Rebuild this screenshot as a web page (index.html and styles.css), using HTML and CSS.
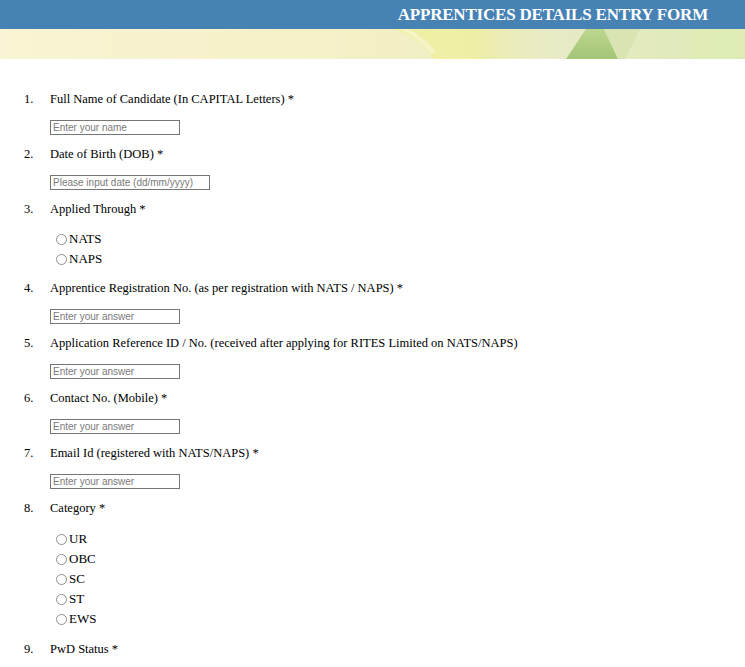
FILE: index.html
```html
<!DOCTYPE html>
<html lang="en">
<head>
<meta charset="utf-8">
<title>Apprentices Details Entry Form</title>
<link rel="stylesheet" href="styles.css">
</head>
<body>
<header class="topbar">
  <h1 class="title">APPRENTICES DETAILS ENTRY FORM</h1>
</header>
<div class="banner">
  <svg class="banner-art" viewBox="0 0 745 30" preserveAspectRatio="none" aria-hidden="true">
    <defs>
      <linearGradient id="bg" x1="0" y1="0" x2="1" y2="0">
        <stop offset="0" stop-color="#f9f4d3"/>
        <stop offset="0.5" stop-color="#f4f0c6"/>
        <stop offset="0.75" stop-color="#e8ebc6"/>
        <stop offset="1" stop-color="#dbe9b6"/>
      </linearGradient>
      <linearGradient id="sw" x1="0" y1="0" x2="1" y2="0">
        <stop offset="0" stop-color="#f1f1a4"/>
        <stop offset="0.5" stop-color="#eeeea6"/>
        <stop offset="1" stop-color="#e9e9c2" stop-opacity="0"/>
      </linearGradient>
      <linearGradient id="tri" x1="0" y1="0" x2="0" y2="1">
        <stop offset="0" stop-color="#bcd68e"/>
        <stop offset="1" stop-color="#a4c577"/>
      </linearGradient>
    </defs>
    <rect x="0" y="0" width="745" height="30" fill="url(#bg)"/>
    <path d="M392 0 C405 4 418 10 426 20 C430 25 432 28 434 30 L560 30 L560 0 Z" fill="url(#sw)"/>
    <path d="M400 0 C412 6 424 14 430 24 L436 24 C428 12 416 4 408 0 Z" fill="#f7f6d8" opacity="0.7"/>
    <polygon points="586,0 604,0 618,30 566,30" fill="url(#tri)"/>
    <polygon points="604,0 640,0 625,30 618,30" fill="#d3e3ad" opacity="0.7"/>
    <rect x="690" y="0" width="55" height="30" fill="#dfecb4" opacity="0.6"/>
  </svg>
</div>

<ol class="form-list">
  <li class="item">
    <span class="num">1.</span>
    <div class="field">
      <label class="q" for="name">Full Name of Candidate (In CAPITAL Letters) *</label>
      <input class="text-in" id="name" type="text" placeholder="Enter your name">
    </div>
  </li>
  <li class="item">
    <span class="num">2.</span>
    <div class="field">
      <label class="q" for="dob">Date of Birth (DOB) *</label>
      <input class="text-in text-in-wide" id="dob" type="text" placeholder="Please input date (dd/mm/yyyy)">
    </div>
  </li>
  <li class="item">
    <span class="num">3.</span>
    <div class="field">
      <span class="q">Applied Through *</span>
      <div class="radios">
        <label class="opt"><input class="radio" type="radio" name="through">NATS</label>
        <label class="opt"><input class="radio" type="radio" name="through">NAPS</label>
      </div>
    </div>
  </li>
  <li class="item">
    <span class="num">4.</span>
    <div class="field">
      <label class="q" for="reg">Apprentice Registration No. (as per registration with NATS / NAPS) *</label>
      <input class="text-in" id="reg" type="text" placeholder="Enter your answer">
    </div>
  </li>
  <li class="item">
    <span class="num">5.</span>
    <div class="field">
      <label class="q" for="ref">Application Reference ID / No. (received after applying for RITES Limited on NATS/NAPS)</label>
      <input class="text-in" id="ref" type="text" placeholder="Enter your answer">
    </div>
  </li>
  <li class="item">
    <span class="num">6.</span>
    <div class="field">
      <label class="q" for="mob">Contact No. (Mobile) *</label>
      <input class="text-in" id="mob" type="text" placeholder="Enter your answer">
    </div>
  </li>
  <li class="item">
    <span class="num">7.</span>
    <div class="field">
      <label class="q" for="email">Email Id (registered with NATS/NAPS) *</label>
      <input class="text-in" id="email" type="text" placeholder="Enter your answer">
    </div>
  </li>
  <li class="item">
    <span class="num">8.</span>
    <div class="field">
      <span class="q">Category *</span>
      <div class="radios radios-loose">
        <label class="opt"><input class="radio" type="radio" name="cat">UR</label>
        <label class="opt"><input class="radio" type="radio" name="cat">OBC</label>
        <label class="opt"><input class="radio" type="radio" name="cat">SC</label>
        <label class="opt"><input class="radio" type="radio" name="cat">ST</label>
        <label class="opt"><input class="radio" type="radio" name="cat">EWS</label>
      </div>
    </div>
  </li>
  <li class="item">
    <span class="num">9.</span>
    <div class="field">
      <span class="q">PwD Status *</span>
    </div>
  </li>
</ol>
</body>
</html>
```

FILE: styles.css
```css
html, body {
  margin: 0;
  padding: 0;
  background: #ffffff;
  color: #000000;
  font-family: "Liberation Serif", "Times New Roman", serif;
  font-size: 12.5px;
}

.topbar {
  height: 29px;
  background: #4682b4;
  display: flex;
  align-items: center;
  justify-content: flex-end;
  padding-right: 37px;
}

.title {
  margin: 0;
  color: #ffffff;
  font-family: "Liberation Serif", "Times New Roman", serif;
  font-weight: bold;
  font-size: 17px;
  line-height: 20px;
  letter-spacing: -0.2px;
}

.banner {
  height: 30px;
  overflow: hidden;
}

.banner-art {
  display: block;
  width: 100%;
  height: 30px;
}

.form-list {
  list-style: none;
  margin: 33px 0 0 0;
  padding: 0 0 0 24px;
}

.item {
  display: flex;
  margin-bottom: 11px;
}

.item-input {
  margin-bottom: 12px;
}

.num {
  width: 26px;
  flex: none;
  line-height: 15px;
}

.field {
  display: flex;
  flex-direction: column;
  align-items: flex-start;
}

.q {
  line-height: 15px;
}

.text-in {
  margin-top: 13px;
  margin-bottom: 1px;
  width: 130px;
  height: 15px;
  box-sizing: border-box;
  border: 1px solid #767676;
  padding: 0 2px;
  font-family: "Liberation Sans", Arial, sans-serif;
  font-size: 10px;
  color: #000;
  background: #fff;
  outline: none;
}

.text-in::placeholder {
  color: #7a7a7a;
}

.text-in-wide {
  width: 160px;
}

.radios {
  margin-top: 12px;
  margin-bottom: 1px;
  display: flex;
  flex-direction: column;
}

.radios-loose {
  margin-top: 13px;
  margin-bottom: 2px;
}

.opt {
  display: flex;
  align-items: center;
  height: 20px;
  line-height: 20px;
  font-size: 13px;
}

.radio {
  appearance: none;
  -webkit-appearance: none;
  width: 11px;
  height: 11px;
  margin: 0 2px 0 6px;
  border: 1px solid #8f8f8f;
  border-radius: 50%;
  background: #fff;
  box-sizing: border-box;
}
```
